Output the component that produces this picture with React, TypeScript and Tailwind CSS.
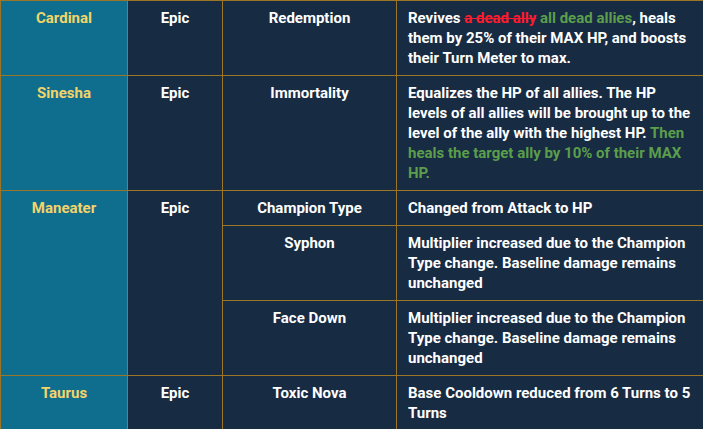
const name = "border border-[#9c7526] bg-[#0f6e8d] text-[#f3d46a] text-center align-top px-2 py-[7px]";
const cell = "border border-[#9c7526] bg-[#172b43] text-white text-center align-top px-2 py-[7px]";
const desc = "border border-[#9c7526] bg-[#172b43] text-white text-left align-top pl-[11px] pr-3 py-[7px]";

const green = "text-[#5b9e4b]";

export default function App() {
  return (
    <div className="w-[703px] h-[429px] overflow-hidden bg-[#172b43] font-['Roboto',sans-serif] font-bold text-[15px] leading-5">
      <table className="w-[703px] table-fixed border-collapse">
        <colgroup>
          <col className="w-[127px]" />
          <col className="w-[95px]" />
          <col className="w-[174px]" />
          <col className="w-[307px]" />
        </colgroup>
        <tbody>
          <tr>
            <td className={name}>Cardinal</td>
            <td className={cell}>Epic</td>
            <td className={cell}>Redemption</td>
            <td className={desc}>
              Revives <s className="text-[#ff1a2e]">a dead ally</s>{" "}
              <span className={green}>all dead allies</span>, heals them by 25% of their MAX HP, and boosts
              their Turn Meter to max.
            </td>
          </tr>
          <tr>
            <td className={name}>Sinesha</td>
            <td className={cell}>Epic</td>
            <td className={cell}>Immortality</td>
            <td className={desc}>
              Equalizes the HP of all allies. The HP levels of all allies will be brought up to the level of
              the ally with the highest HP.{" "}
              <span className={green}>Then heals the target ally by 10% of their MAX HP.</span>
            </td>
          </tr>
          <tr>
            <td rowSpan={3} className={name}>Maneater</td>
            <td rowSpan={3} className={cell}>Epic</td>
            <td className={cell}>Champion Type</td>
            <td className={desc}>Changed from Attack to HP</td>
          </tr>
          <tr>
            <td className={cell}>Syphon</td>
            <td className={desc}>
              Multiplier increased due to the Champion Type change. Baseline damage remains unchanged
            </td>
          </tr>
          <tr>
            <td className={cell}>Face Down</td>
            <td className={desc}>
              Multiplier increased due to the Champion Type change. Baseline damage remains unchanged
            </td>
          </tr>
          <tr>
            <td className={name}>Taurus</td>
            <td className={cell}>Epic</td>
            <td className={cell}>Toxic Nova</td>
            <td className={desc}>Base Cooldown reduced from 6 Turns to 5 Turns</td>
          </tr>
        </tbody>
      </table>
    </div>
  );
}
